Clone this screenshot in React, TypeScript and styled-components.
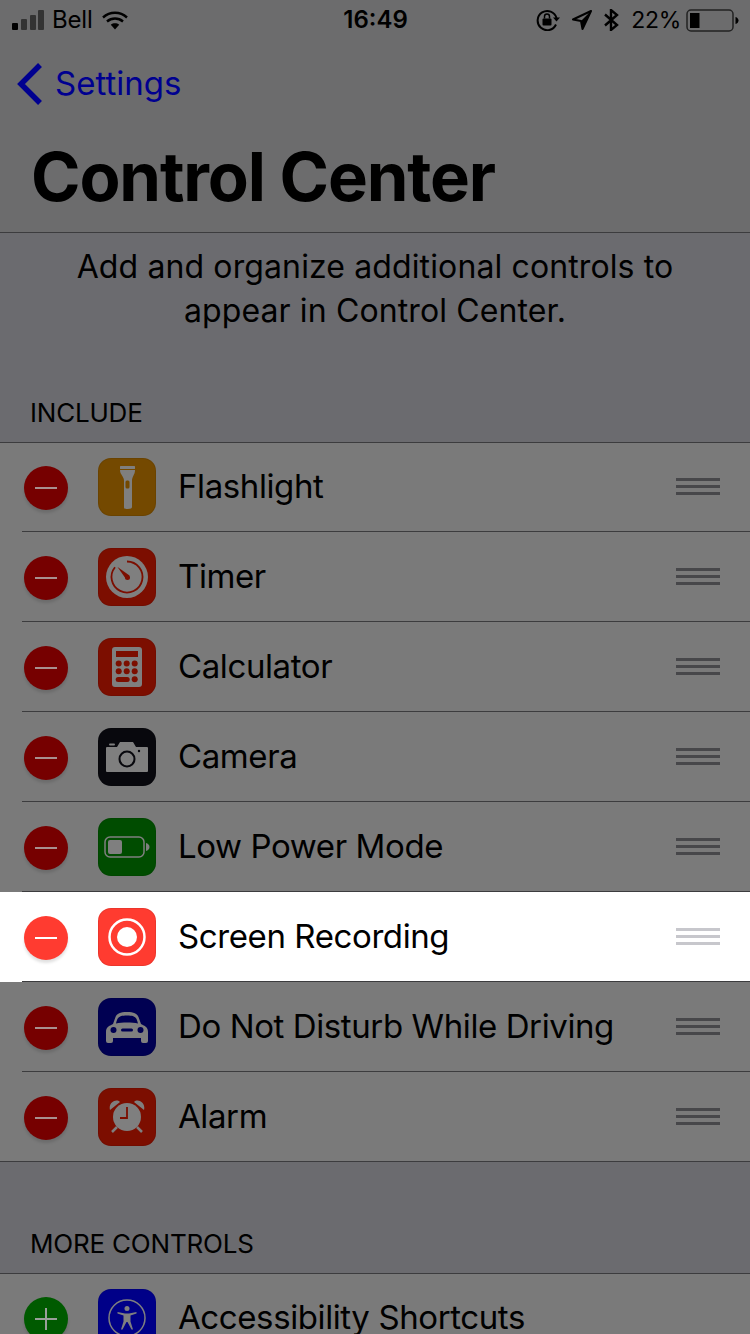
import React from 'react';
import styled, { createGlobalStyle } from 'styled-components';

const Global = createGlobalStyle`
  html, body {
    margin: 0;
    padding: 0;
    background: #6b6b6f;
  }
  * {
    box-sizing: border-box;
  }
`;

const Page = styled.div`
  width: 750px;
  height: 1334px;
  overflow: hidden;
  background: #6b6b6f;
  color: #000;
  font-family: Inter, 'Liberation Sans', sans-serif;
`;

const Header = styled.header`
  height: 233px;
  border-bottom: 1px solid #3c3c3e;
  background: #6c6c6d;
`;

const StatusBar = styled.div`
  height: 40px;
  display: grid;
  grid-template-columns: 1fr auto 1fr;
  align-items: center;
  padding: 0 11px 0 12px;
  font-size: 24px;
  line-height: 40px;
`;

const StatusLeft = styled.div`
  display: flex;
  align-items: center;
`;

const Carrier = styled.span`
  margin: 0 9px 0 7px;
  letter-spacing: -0.2px;
`;

const Clock = styled.span`
  font-weight: 600;
`;

const StatusRight = styled.div`
  display: flex;
  align-items: center;
  justify-content: flex-end;
`;

const StatusIcons = styled.div`
  display: flex;
  align-items: center;
  gap: 12px;
`;

const Percent = styled.span`
  margin: 0 5px 0 12px;
  font-size: 23px;
  letter-spacing: -0.3px;
`;

const BackLink = styled.div`
  display: flex;
  align-items: center;
  height: 50px;
  margin-top: 19px;
  padding-left: 17px;
  gap: 13px;
  color: #000090;
  font-size: 33px;
`;

const BackText = styled.span`
  margin-bottom: 2px;
`;

const Title = styled.h1`
  margin: 28px 0 0 31px;
  font-size: 67px;
  line-height: 80px;
  font-weight: 700;
  letter-spacing: -1.15px;
`;

const Description = styled.p`
  margin: 0;
  padding: 12px 60px 0;
  height: 163px;
  text-align: center;
  font-size: 32px;
  line-height: 44px;
  letter-spacing: 0.12px;
`;

const SectionLabel = styled.div`
  height: 46px;
  padding: 0 30px;
  font-size: 26px;
  line-height: 34px;
  letter-spacing: -0.2px;
`;

const List = styled.div<{ $gap?: boolean }>`
  border-top: 1px solid #3c3c3e;
  margin-bottom: ${(p) => (p.$gap ? '65px' : '0')};
`;

const Row = styled.div<{ $active?: boolean; $last?: boolean }>`
  position: relative;
  height: 90px;
  display: flex;
  align-items: center;
  padding: 0 30px 0 24px;
  background: ${(p) => (p.$active ? '#fff' : '#7a7a7a')};

  &:first-child {
    height: 89px;
    padding-bottom: 1px;
  }

  &::after {
    content: '';
    position: absolute;
    left: ${(p) => (p.$last ? '0' : '22px')};
    right: 0;
    bottom: 0;
    height: 1px;
    background: #3c3c3e;
  }
`;

const RoundButton = styled.div<{ $color: string }>`
  position: relative;
  flex: none;
  width: 44px;
  height: 44px;
  margin: 2px 30px 0 0;
  border-radius: 50%;
  background: ${(p) => p.$color};
  box-shadow: 0 3px 3px rgba(0, 0, 0, 0.12);
`;

const ButtonBar = styled.span<{ $color: string; $vertical?: boolean }>`
  position: absolute;
  left: ${(p) => (p.$vertical ? '21px' : '11px')};
  top: ${(p) => (p.$vertical ? '11px' : '21px')};
  width: ${(p) => (p.$vertical ? '2px' : '22px')};
  height: ${(p) => (p.$vertical ? '22px' : '2px')};
  background: ${(p) => p.$color};
`;

const AppIcon = styled.div<{ $color: string }>`
  flex: none;
  width: 58px;
  height: 58px;
  border-radius: 13px;
  background: ${(p) => p.$color};
  box-shadow: inset 0 0 0 1px rgba(0, 0, 0, 0.08);
  display: flex;
  align-items: center;
  justify-content: center;
  margin-right: 22px;
`;

const RowLabel = styled.span`
  flex: 1;
  padding-bottom: 2px;
  font-size: 33px;
  letter-spacing: -0.4px;
  white-space: nowrap;
`;

const Handle = styled.div<{ $color: string }>`
  flex: none;
  width: 44px;
  margin-bottom: 1px;
  display: flex;
  flex-direction: column;
  gap: 4px;

  span {
    display: block;
    height: 3px;
    background: ${(p) => p.$color};
  }
`;

const Signal = () => (
  <svg width="33" height="20" viewBox="0 0 33 20">
    <rect x="0" y="13" width="6" height="7" rx="1" fill="#000" />
    <rect x="9" y="9" width="6" height="11" rx="1" fill="#333" />
    <rect x="18" y="5" width="6" height="15" rx="1" fill="#333" />
    <rect x="26" y="0" width="6" height="20" rx="1" fill="#333" />
  </svg>
);

const Wifi = () => (
  <svg width="26" height="19" viewBox="0 0 26 19" fill="none" stroke="#000" strokeWidth="2.4">
    <path d="M1 6.5C8 .2 18 .2 25 6.5" />
    <path d="M5 10.5c4.6-4 11.4-4 16 0" />
    <path d="M13 18.5l-4.2-4.8c2.4-1.8 6-1.8 8.4 0z" fill="#000" stroke="none" />
  </svg>
);

const RotationLock = () => (
  <svg width="24" height="22" viewBox="0 0 24 22" fill="none">
    <path d="M20 15.5A9.6 9.6 0 1 1 20.5 9" stroke="#000" strokeWidth="2" />
    <path d="M17 8.5h7l-3.5 4z" fill="#000" />
    <rect x="6.5" y="9.5" width="9" height="7" rx="1" fill="#000" />
    <path d="M8.5 9.5V7.5a2.5 2.5 0 0 1 5 0v2" stroke="#000" strokeWidth="1.5" />
  </svg>
);

const Location = () => (
  <svg width="20" height="20" viewBox="0 0 20 20" fill="none">
    <path d="M19 1 1 9.5l8 1.5 1.5 8z" stroke="#000" strokeWidth="2" strokeLinejoin="round" />
    <path d="M19 1 9 11l1.5 8z" fill="#000" />
  </svg>
);

const Bluetooth = () => (
  <svg width="15" height="22" viewBox="0 0 15 22" fill="none" stroke="#000" strokeWidth="2.4">
    <path d="M1 5.5 13 16l-6 5V1l6 5L1 16.5" />
  </svg>
);

const Battery = () => (
  <svg width="53" height="23" viewBox="0 0 53 23">
    <rect x="1" y="1" width="46" height="21" rx="4" fill="none" stroke="#222" strokeWidth="1.5" />
    <rect x="4" y="4" width="9.5" height="15" fill="#000" />
    <path d="M49.5 8c2 .5 3 2 3 3.5s-1 3-3 3.5z" fill="#000" />
  </svg>
);

const Chevron = () => (
  <svg width="25" height="42" viewBox="0 0 25 42" fill="none">
    <path d="M23 2 4 21l19 19" stroke="#000090" strokeWidth="5.5" />
  </svg>
);

const tint = '#7f7f7f';
const red = '#7c0e00';
const navy = '#000052';
const amber = '#744900';

const FlashlightIcon = () => (
  <svg width="15" height="43" viewBox="0 0 15 43" fill={tint}>
    <rect x="0" y="0" width="15" height="3" rx="0.5" />
    <path d="M0 4h15c0 5-3 6-3 11v26c0 1-1 2-4.5 2S4 42 4 41V15C4 10 0 9 0 4z" />
    <rect x="5.5" y="14.5" width="4" height="8" rx="1.5" fill={amber} />
  </svg>
);

const TimerIcon = () => (
  <svg width="42" height="42" viewBox="0 0 42 42" fill="none">
    <circle cx="21" cy="21" r="21" fill={tint} />
    <path d="M21 5.5a15.5 15.5 0 1 1-12 5.7" stroke={red} strokeWidth="1.8" />
    <path d="M11.5 11 23.5 19.500 20 23z" fill={red} />
    <circle cx="21.5" cy="21.5" r="2.5" fill={red} />
  </svg>
);

const CalculatorIcon = () => (
  <svg width="30" height="40" viewBox="0 0 30 40">
    <rect width="30" height="40" rx="3" fill={tint} />
    <rect x="4" y="4" width="22" height="6" fill={red} />
    {[16.5, 24.3].map((y) =>
      [6.7, 14.7, 22.7].map((x) => <circle key={`${x}-${y}`} cx={x} cy={y} r="3" fill={red} />),
    )}
    <rect x="3.7" y="30" width="14" height="5" rx="2.5" fill={red} />
    <circle cx="22.7" cy="32.3" r="3" fill={red} />
  </svg>
);

const CameraIcon = () => (
  <svg width="42" height="30" viewBox="0 0 42 30">
    <path
      d="M1 5h10l3-5h13l3 5h11a1 1 0 0 1 1 1v23a1 1 0 0 1-1 1H1a1 1 0 0 1-1-1V6a1 1 0 0 1 1-1z"
      fill={tint}
    />
    <rect x="3" y="1.5" width="6" height="2" rx="1" fill={tint} />
    <circle cx="21" cy="17" r="7.5" fill="none" stroke="#08080d" strokeWidth="2" />
    <circle cx="33" cy="9" r="1.2" fill="#08080d" />
  </svg>
);

const BatteryIcon = () => (
  <svg width="46" height="22" viewBox="0 0 46 22">
    <rect x="1" y="1" width="39" height="20" rx="5" fill="none" stroke={tint} strokeWidth="1.5" />
    <rect x="4" y="4" width="14" height="14" rx="2" fill={tint} />
    <path d="M42 7c2 .5 3.5 2 3.5 4s-1.500 3.500-3.500 4z" fill={tint} />
  </svg>
);

const RecordIcon = () => (
  <svg width="38" height="38" viewBox="0 0 38 38">
    <circle cx="19" cy="19" r="17.5" fill="none" stroke="#fff" strokeWidth="2.5" />
    <circle cx="19" cy="19" r="10" fill="#fff" />
  </svg>
);

const CarIcon = () => (
  <svg width="42" height="31" viewBox="0 0 42 31">
    <path
      d="M7 12 9.5 5C11 1.5 14 0 21 0s10 1.5 11.5 5L35 12c4 2 7 3 7 8v9a2 2 0 0 1-2 2h-3a2 2 0 0 1-2-2v-3H7v3a2 2 0 0 1-2 2H2a2 2 0 0 1-2-2v-9c0-5 3-6 7-8z"
      fill={tint}
    />
    <path d="M10 11.5C11.5 6 12 3.5 21 3.5s9.5 2.5 11 8c-6-1.2-16-1.2-22 0z" fill={navy} />
    <circle cx="7.5" cy="18" r="3" fill={navy} />
    <circle cx="34.5" cy="18" r="3" fill={navy} />
    <rect x="15" y="16.5" width="12" height="3" rx="1.5" fill={navy} />
  </svg>
);

const AlarmIcon = () => (
  <svg width="36" height="34" viewBox="0 0 36 34" fill="none">
    <path d="M1 10C-1 3 7-2 11 2zM35 10c2-7-6-12-10-8z" fill={tint} />
    <circle cx="18" cy="17" r="14" fill={tint} />
    <path d="M18 7v11h-7" stroke={red} strokeWidth="1.8" />
    <path d="M8 27l-5 5M28 27l5 5" stroke={tint} strokeWidth="2.5" />
  </svg>
);

const AccessibilityIcon = () => (
  <svg width="38" height="38" viewBox="0 0 38 38" fill="none">
    <circle cx="19" cy="19" r="18" stroke={tint} strokeWidth="1.5" />
    <circle cx="19" cy="9.5" r="2.5" fill={tint} />
    <path
      d="M9.5 13 17 14.5h4l7.5-1.5v1.5l-6 2v6l2.5 8h-1.5l-4-7.5h-1l-4 7.5H13l2.5-8v-6l-6-2z"
      fill={tint}
    />
  </svg>
);

type Control = {
  label: string;
  color: string;
  icon: React.ReactNode;
  active?: boolean;
};

const included: Control[] = [
  { label: 'Flashlight', color: amber, icon: <FlashlightIcon /> },
  { label: 'Timer', color: red, icon: <TimerIcon /> },
  { label: 'Calculator', color: red, icon: <CalculatorIcon /> },
  { label: 'Camera', color: '#08080d', icon: <CameraIcon /> },
  { label: 'Low Power Mode', color: '#004c00', icon: <BatteryIcon /> },
  { label: 'Screen Recording', color: '#ff3b30', icon: <RecordIcon />, active: true },
  { label: 'Do Not Disturb While Driving', color: navy, icon: <CarIcon /> },
  { label: 'Alarm', color: red, icon: <AlarmIcon /> },
];

function ControlRow({
  control,
  last,
  add,
}: {
  control: Control;
  last?: boolean;
  add?: boolean;
}) {
  const { label, color, icon, active } = control;
  const buttonColor = active ? '#ff3b30' : add ? '#005a00' : '#760000';
  const barColor = active ? '#fff' : add ? '#9a9f9a' : '#a8908f';

  return (
    <Row $active={active} $last={last}>
      <RoundButton $color={buttonColor}>
        <ButtonBar $color={barColor} />
        {add && <ButtonBar $color={barColor} $vertical />}
      </RoundButton>
      <AppIcon $color={color}>{icon}</AppIcon>
      <RowLabel>{label}</RowLabel>
      {!add && (
        <Handle $color={active ? '#c7c7cc' : '#47474a'}>
          <span />
          <span />
          <span />
        </Handle>
      )}
    </Row>
  );
}

export default function App() {
  return (
    <Page>
      <Global />
      <Header>
        <StatusBar>
          <StatusLeft>
            <Signal />
            <Carrier>Bell</Carrier>
            <Wifi />
          </StatusLeft>
          <Clock>16:49</Clock>
          <StatusRight>
            <StatusIcons>
              <RotationLock />
              <Location />
              <Bluetooth />
            </StatusIcons>
            <Percent>22%</Percent>
            <Battery />
          </StatusRight>
        </StatusBar>
        <BackLink>
          <Chevron />
          <BackText>Settings</BackText>
        </BackLink>
        <Title>Control Center</Title>
      </Header>
      <Description>
        Add and organize additional controls to appear in Control Center.
      </Description>
      <SectionLabel>INCLUDE</SectionLabel>
      <List $gap>
        {included.map((control, i) => (
          <ControlRow key={control.label} control={control} last={i === included.length - 1} />
        ))}
      </List>
      <SectionLabel>MORE CONTROLS</SectionLabel>
      <List>
        <ControlRow
          add
          control={{
            label: 'Accessibility Shortcuts',
            color: '#000088',
            icon: <AccessibilityIcon />,
          }}
        />
      </List>
    </Page>
  );
}
